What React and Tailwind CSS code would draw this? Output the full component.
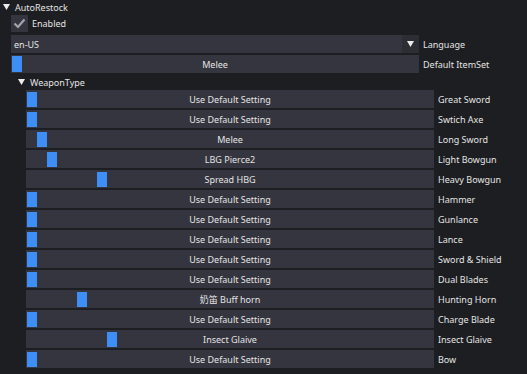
import React from 'react';

const weapons = [
  { value: 'Use Default Setting', label: 'Great Sword', grab: 1 },
  { value: 'Use Default Setting', label: 'Swtich Axe', grab: 1 },
  { value: 'Melee', label: 'Long Sword', grab: 11 },
  { value: 'LBG Pierce2', label: 'Light Bowgun', grab: 21 },
  { value: 'Spread HBG', label: 'Heavy Bowgun', grab: 71 },
  { value: 'Use Default Setting', label: 'Hammer', grab: 1 },
  { value: 'Use Default Setting', label: 'Gunlance', grab: 1 },
  { value: 'Use Default Setting', label: 'Lance', grab: 1 },
  { value: 'Use Default Setting', label: 'Sword & Shield', grab: 1 },
  { value: 'Use Default Setting', label: 'Dual Blades', grab: 1 },
  { value: '奶笛 Buff horn', label: 'Hunting Horn', grab: 51 },
  { value: 'Use Default Setting', label: 'Charge Blade', grab: 1 },
  { value: 'Insect Glaive', label: 'Insect Glaive', grab: 81 },
  { value: 'Use Default Setting', label: 'Bow', grab: 1 },
];

function Arrow() {
  return (
    <svg width="7" height="6" viewBox="0 0 7 6">
      <polygon points="0,0 7,0 3.5,6" fill="#ececec" />
    </svg>
  );
}

function Slider({ value, grab }) {
  return (
    <div className="relative h-[18px] w-[408px] bg-[#35353f] flex items-center justify-center">
      <div className="absolute top-[2px] h-[15px] w-[10px] bg-[#3d8ef5]" style={{ left: grab }} />
      <span className="relative">{value}</span>
    </div>
  );
}

export default function App() {
  return (
    <div
      className="w-[527px] h-[374px] overflow-hidden bg-[#1d1e21] text-[#e4e4e4] text-[9px] leading-none"
      style={{ fontFamily: '"Noto Sans", "Noto Sans CJK SC", sans-serif' }}
    >
      {/* AutoRestock header */}
      <div className="flex items-center h-[14px] pl-[3px] gap-[5px]">
        <Arrow />
        <span>AutoRestock</span>
      </div>

      <div className="pl-[11px] flex flex-col mt-[1px]">
        {/* Enabled checkbox */}
        <div className="flex items-center gap-[4px] h-[17px]">
          <div className="w-[17px] h-[17px] bg-[#35353f] flex items-center justify-center">
            <svg width="13" height="11" viewBox="0 0 13 11">
              <polyline points="1.5,5.5 5,9 11.5,1.5" fill="none" stroke="#a4a4ac" strokeWidth="2.2" />
            </svg>
          </div>
          <span>Enabled</span>
        </div>

        {/* Language combo */}
        <div className="flex items-center h-[18px] mt-[3px]">
          <div className="w-[408px] h-[18px] bg-[#35353f] flex items-center">
            <span className="flex-1 pl-[3px]">en-US</span>
            <div className="w-[17px] h-[18px] bg-[#2d2d34] flex items-center justify-center">
              <Arrow />
            </div>
          </div>
          <span className="pl-[4px]">Language</span>
        </div>

        {/* Default ItemSet */}
        <div className="flex items-center mt-[2px]">
          <div className="relative h-[18px] w-[408px] bg-[#35353f] flex items-center justify-center">
            <div className="absolute top-[1px] left-[1px] h-[16px] w-[10px] bg-[#3d8ef5]" />
            <span className="relative">Melee</span>
          </div>
          <span className="pl-[4px]">Default ItemSet</span>
        </div>
      </div>

      {/* WeaponType tree */}
      <div className="flex items-center h-[14px] pl-[18px] gap-[5px] mt-[2px]">
        <Arrow />
        <span>WeaponType</span>
      </div>

      <div className="pl-[26px] flex flex-col gap-[2px] mt-[1px]">
        {weapons.map((w, i) => (
          <div key={i} className="flex items-center">
            <Slider value={w.value} grab={w.grab} />
            <span className="pl-[4px]">{w.label}</span>
          </div>
        ))}
      </div>

      <div className="flex items-center h-[14px] pl-[18px] gap-[5px] mt-[2px]">
        <Arrow />
        <span>ItemSetting</span>
      </div>
    </div>
  );
}
